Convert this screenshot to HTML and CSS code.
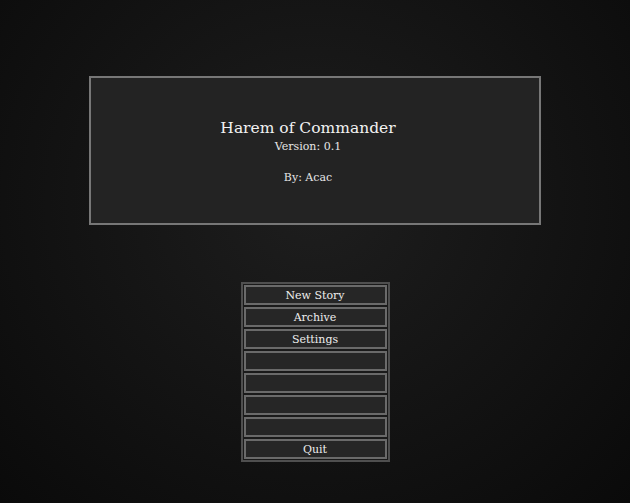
FILE: index.html
```html
<!DOCTYPE html>
<html>
<head>
<meta charset="utf-8">
<link rel="stylesheet" href="styles.css">
</head>
<body>
<div class="screen">
  <div class="title-panel">
    <div class="title">Harem of Commander</div>
    <div class="version">Version: 0.1</div>
    <div class="author">By: Acac</div>
  </div>
  <div class="menu">
    <div class="btn">New Story</div>
    <div class="btn">Archive</div>
    <div class="btn">Settings</div>
    <div class="btn"></div>
    <div class="btn"></div>
    <div class="btn"></div>
    <div class="btn"></div>
    <div class="btn">Quit</div>
  </div>
</div>
</body>
</html>
```

FILE: styles.css
```css
html, body {
  margin: 0;
  padding: 0;
  width: 630px;
  height: 503px;
  overflow: hidden;
}
body {
  background: radial-gradient(ellipse at 50% 40%, #1e1e1e 0%, #151515 45%, #0a0a0a 100%);
  font-family: "DejaVu Serif", "Liberation Serif", serif;
  color: #eeeeee;
}
.screen {
  display: flex;
  flex-direction: column;
  align-items: center;
  padding-top: 76px;
}
.title-panel {
  box-sizing: border-box;
  width: 452px;
  height: 149px;
  border: 2px solid #777777;
  background: #232323;
  display: flex;
  flex-direction: column;
  align-items: center;
  padding-top: 40px;
  padding-right: 14px;
}
.title {
  font-size: 15.5px;
  line-height: 21px;
  color: #f2f2f2;
}
.version {
  font-size: 11px;
  line-height: 16px;
  color: #e6e6e6;
}
.author {
  font-size: 11px;
  line-height: 16px;
  margin-top: 15px;
  color: #e6e6e6;
}
.menu {
  margin-top: 57px;
  box-sizing: border-box;
  width: 149px;
  border: 2px solid #4f4f4f;
  background: #1a1a1a;
  padding: 1px;
  display: flex;
  flex-direction: column;
  gap: 2px;
}
.btn {
  box-sizing: border-box;
  height: 20px;
  border: 2px solid #6a6a6a;
  background: #262626;
  text-align: center;
  font-size: 11px;
  line-height: 17px;
  color: #eeeeee;
}
```
